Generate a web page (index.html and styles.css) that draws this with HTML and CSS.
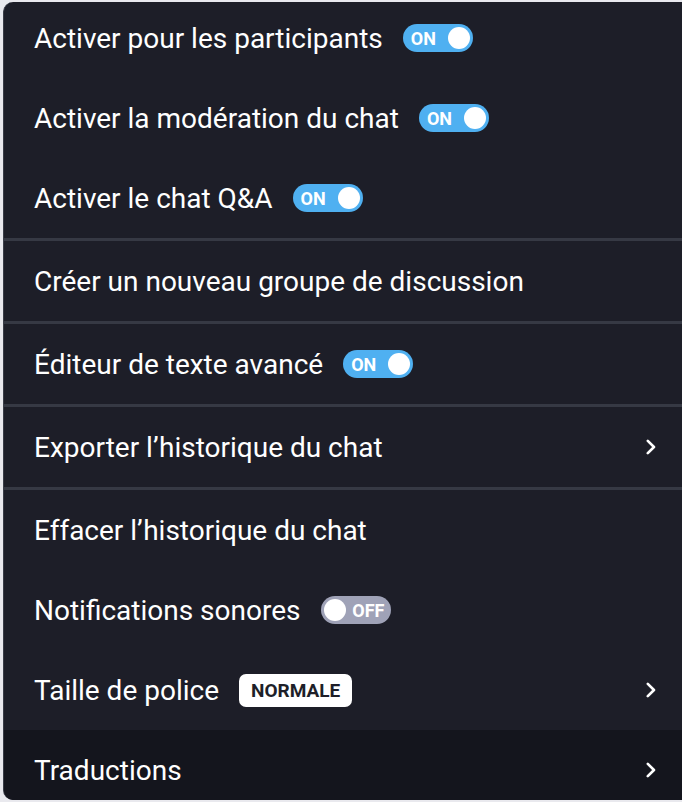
FILE: index.html
```html
<!DOCTYPE html>
<html lang="fr">
<head>
    <meta charset="UTF-8">
    <meta name="viewport" content="width=device-width, initial-scale=1.0">
    <title>Options du chat</title>
    <link rel="stylesheet" href="styles.css">
</head>
<body>
    <div class="menu">
        <div class="row first">
            <span class="label">Activer pour les participants</span>
            <span class="toggle on"><span class="toggle-text">ON</span><span class="knob"></span></span>
        </div>
        <div class="row">
            <span class="label">Activer la modération du chat</span>
            <span class="toggle on"><span class="toggle-text">ON</span><span class="knob"></span></span>
        </div>
        <div class="row">
            <span class="label">Activer le chat Q&amp;A</span>
            <span class="toggle on"><span class="toggle-text">ON</span><span class="knob"></span></span>
        </div>
        <div class="divider"></div>
        <div class="row">
            <span class="label">Créer un nouveau groupe de discussion</span>
        </div>
        <div class="divider"></div>
        <div class="row">
            <span class="label">Éditeur de texte avancé</span>
            <span class="toggle on"><span class="toggle-text">ON</span><span class="knob"></span></span>
        </div>
        <div class="divider"></div>
        <div class="row">
            <span class="label">Exporter l’historique du chat</span>
            <svg class="chevron" width="12" height="16" viewBox="0 0 12 16"><path d="M2.8 1.8 L9 8 L2.8 14.2" fill="none" stroke="#fff" stroke-width="2.6" stroke-linecap="round" stroke-linejoin="round"/></svg>
        </div>
        <div class="divider"></div>
        <div class="row">
            <span class="label">Effacer l’historique du chat</span>
        </div>
        <div class="row">
            <span class="label">Notifications sonores</span>
            <span class="toggle off"><span class="knob"></span><span class="toggle-text">OFF</span></span>
        </div>
        <div class="row">
            <span class="label">Taille de police</span>
            <span class="badge">NORMALE</span>
            <svg class="chevron" width="12" height="16" viewBox="0 0 12 16"><path d="M2.8 1.8 L9 8 L2.8 14.2" fill="none" stroke="#fff" stroke-width="2.6" stroke-linecap="round" stroke-linejoin="round"/></svg>
        </div>
        <div class="row last">
            <span class="label">Traductions</span>
            <svg class="chevron" width="12" height="16" viewBox="0 0 12 16"><path d="M2.8 1.8 L9 8 L2.8 14.2" fill="none" stroke="#fff" stroke-width="2.6" stroke-linecap="round" stroke-linejoin="round"/></svg>
        </div>
    </div>
</body>
</html>
```

FILE: styles.css
```css
/* Chat options menu */
* {
    box-sizing: border-box;
}

body {
    margin: 0;
    background-color: #e9e9ee;
    font-family: Roboto, "Noto Sans", Arial, sans-serif;
    overflow: hidden;
}

.menu {
    margin: 2px -20px 0 3px;
    background-color: #1d1e28;
    border-left: 1px solid #3a3d48;
    border-radius: 10px;
    overflow: hidden;
    height: 798px;
}

.row {
    display: flex;
    align-items: center;
    height: 80px;
    padding: 0 45px 0 30px;
    color: #fff;
    font-size: 28px;
}

.row.first {
    height: 76px;
    padding-bottom: 4px;
}

.row.last {
    height: 70px;
    padding-top: 10px;
    background-color: #14151d;
}

.label {
    margin-right: 20px;
    white-space: nowrap;
}

.divider {
    height: 3px;
    background-color: #363944;
}

.toggle {
    display: inline-flex;
    align-items: center;
    justify-content: space-between;
    width: 70px;
    height: 28px;
    border-radius: 14px;
    color: #fff;
    font-size: 18px;
    font-weight: 700;
}

.toggle.on {
    background-color: #4fb0f1;
    padding: 0 3px 0 8px;
}

.toggle.off {
    background-color: #9fa2b7;
    padding: 0 6px 0 3px;
}

.knob {
    width: 22px;
    height: 22px;
    border-radius: 50%;
    background-color: #fff;
}

.badge {
    display: inline-block;
    background-color: #fff;
    color: #1e1f29;
    font-size: 19px;
    font-weight: 700;
    padding: 5px 12px;
    border-radius: 7px;
}

.chevron {
    margin-left: auto;
}
```
